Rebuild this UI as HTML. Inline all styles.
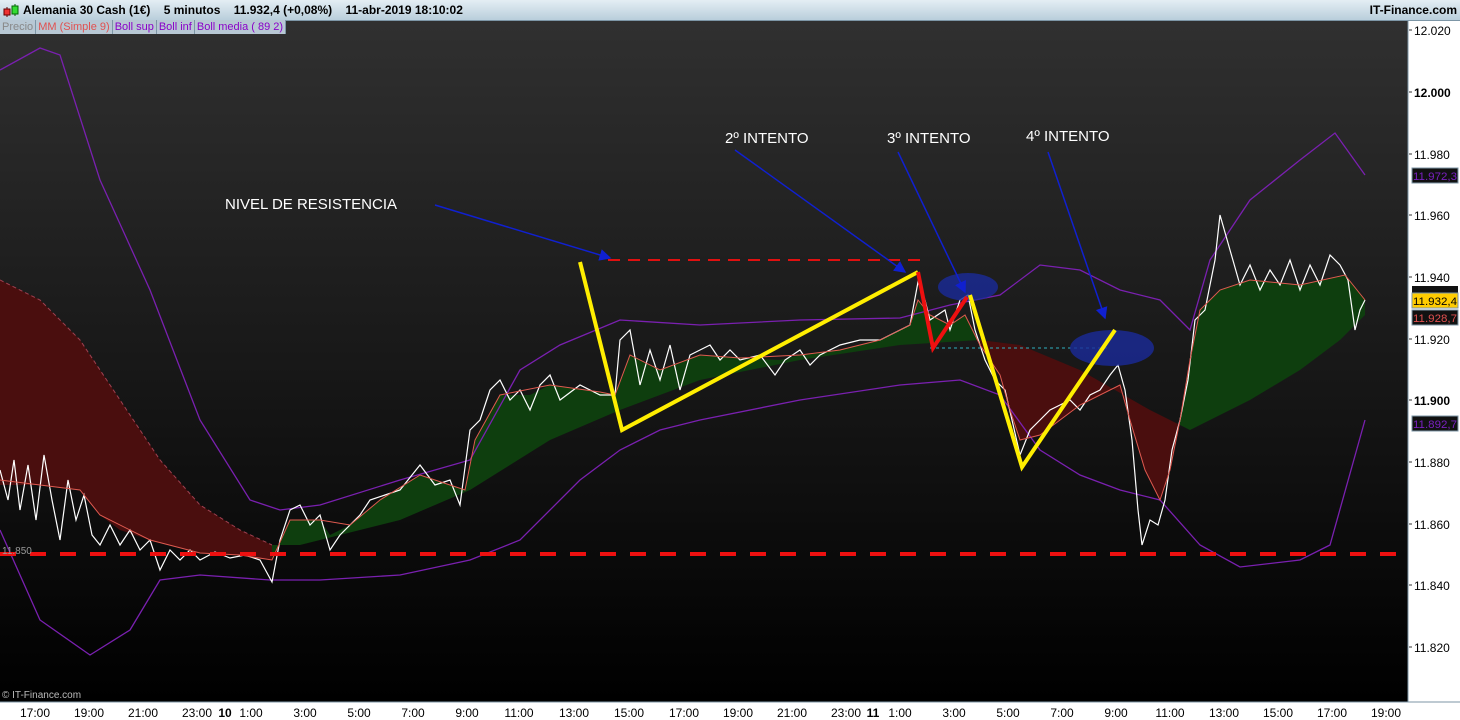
<!DOCTYPE html>
<html><head><meta charset="utf-8"><style>
body{margin:0;width:1460px;height:720px;overflow:hidden;font-family:"Liberation Sans",sans-serif;background:#fff}
.hdr{position:absolute;left:0;top:0;width:1460px;height:20px;background:linear-gradient(#e4eef4,#b9cedb);border-bottom:1px solid #7d96a6;font-size:12px;font-weight:bold;color:#000}
.leg{position:absolute;top:20px;left:0;height:14px;font-size:11px;display:flex;z-index:3}
.leg span{background:#b8c8d4;border-right:1px solid #7d96a6;padding:0 2px;line-height:14px}
</style></head><body>
<div class="hdr">
<svg style="position:absolute;left:3px;top:3px" width="16" height="15"><line x1="4" y1="4" x2="4" y2="14" stroke="#600"/><rect x="1" y="6" width="6" height="6" fill="#e33" stroke="#600"/><line x1="12" y1="1" x2="12" y2="13" stroke="#060"/><rect x="9" y="3" width="6" height="8" fill="#3d3" stroke="#060"/></svg>
<span style="position:absolute;left:23px;top:3px">Alemania 30 Cash (1€)&nbsp;&nbsp;&nbsp; 5 minutos&nbsp;&nbsp;&nbsp; 11.932,4 (+0,08%)&nbsp;&nbsp;&nbsp; 11-abr-2019 18:10:02</span>
<span style="position:absolute;right:3px;top:3px">IT-Finance.com</span>
</div>
<div class="leg"><span style="color:#888">Precio</span><span style="color:#e05050">MM (Simple 9)</span><span style="color:#8a00c8">Boll sup</span><span style="color:#8a00c8">Boll inf</span><span style="color:#8a00c8">Boll media ( 89 2)</span></div>
<svg style="position:absolute;left:0;top:0" width="1460" height="720" font-family="Liberation Sans,sans-serif">
<defs>
<linearGradient id="bg" x1="0" y1="0" x2="0" y2="1"><stop offset="0" stop-color="#303030"/><stop offset="1" stop-color="#000"/></linearGradient>
<clipPath id="cr"><rect x="0" y="0" width="272" height="720"/><rect x="980" y="0" width="200" height="720"/></clipPath>
<clipPath id="cg"><rect x="272" y="0" width="708" height="720"/><rect x="1180" y="0" width="200" height="720"/></clipPath>
<marker id="ar" markerWidth="8" markerHeight="8" refX="7" refY="4" orient="auto"><path d="M0,0 L8,4 L0,8 z" fill="#1020d0"/></marker>
</defs>
<rect x="0" y="21" width="1408" height="681" fill="url(#bg)"/>
<g>
<polygon clip-path="url(#cr)" fill="#4a0e0e" points="0,280 40,300 80,340 120,400 160,460 200,505 240,530 272,545 300,545 400,520 470,490 550,440 620,410 700,380 800,360 900,345 980,340 1020,345 1080,370 1150,410 1190,430 1250,400 1300,370 1340,340 1365,315 1365,300 1345,275 1300,285 1250,280 1220,290 1200,310 1190,360 1180,420 1170,470 1160,500 1145,470 1130,420 1120,385 1100,395 1080,405 1060,420 1040,435 1020,440 1010,410 1000,375 980,345 965,315 950,325 930,315 918,300 910,325 880,340 840,350 800,355 780,360 740,358 700,355 660,370 630,355 615,395 600,392 550,385 530,395 500,395 475,440 465,490 450,485 420,475 380,500 350,525 330,535 320,520 290,520 272,560 240,555 200,553 150,540 120,530 100,515 80,490 40,485 0,485"/>
<polygon clip-path="url(#cg)" fill="#0e3e0e" points="0,280 40,300 80,340 120,400 160,460 200,505 240,530 272,545 300,545 400,520 470,490 550,440 620,410 700,380 800,360 900,345 980,340 1020,345 1080,370 1150,410 1190,430 1250,400 1300,370 1340,340 1365,315 1365,300 1345,275 1300,285 1250,280 1220,290 1200,310 1190,360 1180,420 1170,470 1160,500 1145,470 1130,420 1120,385 1100,395 1080,405 1060,420 1040,435 1020,440 1010,410 1000,375 980,345 965,315 950,325 930,315 918,300 910,325 880,340 840,350 800,355 780,360 740,358 700,355 660,370 630,355 615,395 600,392 550,385 530,395 500,395 475,440 465,490 450,485 420,475 380,500 350,525 330,535 320,520 290,520 272,560 240,555 200,553 150,540 120,530 100,515 80,490 40,485 0,485"/>
</g>
<polyline fill="none" stroke="#a04050" stroke-dasharray="4,3" points="0,280 40,300 80,340 120,400 160,460 200,505 240,530 272,545"/>
<polyline fill="none" stroke="#7a20b0" stroke-width="1.3" points="0,70 40,48 60,55 100,180 150,290 200,420 250,500 280,510 320,505 400,480 470,460 520,370 560,345 620,320 700,325 800,320 900,318 950,305 1000,295 1040,265 1080,270 1120,290 1160,300 1190,330 1210,260 1250,200 1300,160 1335,133 1365,175"/>
<polyline fill="none" stroke="#7a20b0" stroke-width="1.3" points="0,530 40,620 90,655 130,630 160,580 200,575 270,580 320,580 400,575 470,560 520,540 580,480 620,450 660,430 700,420 800,400 900,385 960,380 1000,395 1040,450 1080,475 1120,490 1160,500 1200,545 1240,567 1300,560 1330,545 1365,420"/>
<polyline fill="none" stroke="#fff" stroke-width="1.2" points="0,470 8,500 14,460 20,510 28,465 36,520 44,455 52,500 60,540 68,480 76,520 84,495 92,535 100,545 110,525 120,545 130,530 140,550 150,540 160,570 170,550 180,560 190,550 200,560 215,552 230,558 245,555 260,560 272,582 280,540 290,510 300,505 310,525 320,515 330,550 340,535 350,525 360,515 370,500 385,495 400,490 420,465 435,485 450,480 460,505 470,430 480,420 490,390 500,380 510,400 520,390 530,410 540,385 550,375 560,400 580,385 600,395 615,395 620,340 630,330 640,385 650,350 660,380 670,345 680,390 690,355 700,350 710,345 720,360 730,350 740,360 760,355 775,375 785,360 800,350 810,365 820,355 840,345 860,340 880,340 900,330 910,325 918,282 925,300 930,320 945,310 950,330 960,300 968,295 975,330 985,360 995,380 1005,390 1012,420 1020,455 1030,430 1040,420 1050,410 1060,405 1070,400 1080,410 1090,395 1100,390 1110,375 1118,365 1125,390 1132,440 1138,510 1142,545 1150,520 1158,525 1165,500 1172,450 1180,420 1188,380 1195,320 1205,310 1215,260 1220,215 1230,250 1240,285 1250,265 1260,290 1270,270 1280,285 1290,260 1300,290 1310,265 1320,285 1330,255 1340,265 1348,280 1355,330 1360,310 1365,300"/>
<polyline fill="none" stroke="#e05a50" stroke-width="1" points="0,480 40,485 80,490 100,515 150,540 200,553 240,555 272,560 290,520 320,520 350,525 380,500 420,475 450,485 465,490 475,440 500,395 550,385 600,392 615,395 630,355 660,370 700,355 740,358 800,355 840,350 880,340 910,325 918,300 930,315 950,325 965,315 980,345 1000,375 1010,410 1020,440 1040,435 1080,405 1120,385 1130,420 1145,470 1160,500 1170,470 1180,420 1190,360 1200,310 1220,290 1250,280 1300,285 1345,275 1365,300"/>
<line x1="608" y1="260" x2="928" y2="260" stroke="#e01010" stroke-width="2" stroke-dasharray="12,8"/>
<line x1="0" y1="554" x2="1408" y2="554" stroke="#ee1010" stroke-width="4" stroke-dasharray="16,14"/>
<line x1="930" y1="348" x2="1110" y2="348" stroke="#30b0c0" stroke-dasharray="3,3"/>
<ellipse cx="968" cy="287" rx="30" ry="14" fill="#1a2a9a" opacity="0.8"/>
<ellipse cx="1112" cy="348" rx="42" ry="18" fill="#1a2a9a" opacity="0.8"/>
<polyline fill="none" stroke="#ffee00" stroke-width="4" points="580,262 622,430 918,272"/>
<polyline fill="none" stroke="#ffee00" stroke-width="4" points="970,295 1022,467 1115,330"/>
<polyline fill="none" stroke="#ee1010" stroke-width="4" points="918,272 933,348 967,297"/>
<g stroke="#1020d0" stroke-width="1.5" marker-end="url(#ar)">
<line x1="435" y1="205" x2="610" y2="258"/><line x1="735" y1="150" x2="905" y2="272"/><line x1="898" y1="152" x2="965" y2="292"/><line x1="1048" y1="152" x2="1105" y2="318"/></g>
<g fill="#fff" font-size="15"><text x="225" y="209">NIVEL DE RESISTENCIA</text><text x="725" y="143">2º INTENTO</text><text x="887" y="143">3º INTENTO</text><text x="1026" y="141">4º INTENTO</text></g>
<text x="2" y="554" fill="#999" font-size="10">11.850</text>
<text x="2" y="698" fill="#bbb" font-size="10">© IT-Finance.com</text>
<rect x="1408" y="21" width="52" height="681" fill="#fff"/>
<line x1="1408" y1="21" x2="1408" y2="702" stroke="#7d96a6"/>
<g font-size="12" fill="#000">
<text x="1414" y="35">12.020</text><text x="1414" y="97" font-weight="bold">12.000</text><text x="1414" y="159">11.980</text><text x="1414" y="220">11.960</text><text x="1414" y="282">11.940</text><text x="1414" y="344">11.920</text><text x="1414" y="405" font-weight="bold">11.900</text><text x="1414" y="467">11.880</text><text x="1414" y="529">11.860</text><text x="1414" y="590">11.840</text><text x="1414" y="652">11.820</text></g>
<g stroke="#333"><line x1="1409" y1="30" x2="1412" y2="30"/><line x1="1409" y1="92" x2="1412" y2="92"/><line x1="1409" y1="154" x2="1412" y2="154"/><line x1="1409" y1="215" x2="1412" y2="215"/><line x1="1409" y1="277" x2="1412" y2="277"/><line x1="1409" y1="339" x2="1412" y2="339"/><line x1="1409" y1="400" x2="1412" y2="400"/><line x1="1409" y1="462" x2="1412" y2="462"/><line x1="1409" y1="524" x2="1412" y2="524"/><line x1="1409" y1="585" x2="1412" y2="585"/><line x1="1409" y1="647" x2="1412" y2="647"/></g>
<g font-size="11" textLength="42">
<rect x="1412" y="168" width="46" height="15" fill="#111" stroke="#7d96a6"/><text x="1413" y="180" fill="#7a20c0" textLength="44" lengthAdjust="spacingAndGlyphs">11.972,3</text>
<rect x="1412" y="286" width="46" height="8" fill="#111"/>
<rect x="1412" y="293" width="46" height="15" fill="#ffcc00" stroke="#7d96a6"/><text x="1413" y="305" fill="#000" textLength="44" lengthAdjust="spacingAndGlyphs">11.932,4</text>
<rect x="1412" y="310" width="46" height="15" fill="#111" stroke="#7d96a6"/><text x="1413" y="322" fill="#e05050" textLength="44" lengthAdjust="spacingAndGlyphs">11.928,7</text>
<rect x="1412" y="416" width="46" height="15" fill="#111" stroke="#7d96a6"/><text x="1413" y="428" fill="#7a20c0" textLength="44" lengthAdjust="spacingAndGlyphs">11.892,7</text>
</g>
<rect x="0" y="702" width="1460" height="18" fill="#fff"/>
<line x1="0" y1="702" x2="1460" y2="702" stroke="#7d96a6"/>
<g font-size="12" fill="#000" text-anchor="middle">
<text x="35" y="717">17:00</text><text x="89" y="717">19:00</text><text x="143" y="717">21:00</text><text x="197" y="717">23:00</text><text x="225" y="717" font-weight="bold">10</text><text x="251" y="717">1:00</text><text x="305" y="717">3:00</text><text x="359" y="717">5:00</text><text x="413" y="717">7:00</text><text x="467" y="717">9:00</text><text x="519" y="717">11:00</text><text x="574" y="717">13:00</text><text x="629" y="717">15:00</text><text x="684" y="717">17:00</text><text x="738" y="717">19:00</text><text x="792" y="717">21:00</text><text x="846" y="717">23:00</text><text x="873" y="717" font-weight="bold">11</text><text x="900" y="717">1:00</text><text x="954" y="717">3:00</text><text x="1008" y="717">5:00</text><text x="1062" y="717">7:00</text><text x="1116" y="717">9:00</text><text x="1170" y="717">11:00</text><text x="1224" y="717">13:00</text><text x="1278" y="717">15:00</text><text x="1332" y="717">17:00</text><text x="1386" y="717">19:00</text></g>
</svg>
</body></html>
